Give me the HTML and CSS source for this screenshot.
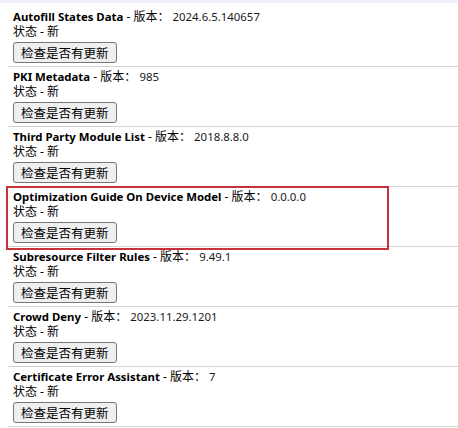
FILE: index.html
```html
<!DOCTYPE html>
<html lang="zh-CN">
<head>
    <meta charset="UTF-8">
    <meta name="viewport" content="width=device-width, initial-scale=1.0">
    <title>组件</title>
    <link rel="stylesheet" href="styles.css">
</head>
<body>
    <div class="top-strip"></div>
    <div class="component-list">
        <div class="component">
            <div class="component-title"><span class="component-name">Autofill States Data</span> - <span>版本：</span> <span class="component-version">2024.6.5.140657</span></div>
            <div class="component-status">状态 - 新</div>
            <button class="check-button">检查是否有更新</button>
        </div>
        <div class="component">
            <div class="component-title"><span class="component-name">PKI Metadata</span> - <span>版本：</span> <span class="component-version">985</span></div>
            <div class="component-status">状态 - 新</div>
            <button class="check-button">检查是否有更新</button>
        </div>
        <div class="component">
            <div class="component-title"><span class="component-name">Third Party Module List</span> - <span>版本：</span> <span class="component-version">2018.8.8.0</span></div>
            <div class="component-status">状态 - 新</div>
            <button class="check-button">检查是否有更新</button>
        </div>
        <div class="component highlighted">
            <div class="component-title"><span class="component-name">Optimization Guide On Device Model</span> - <span>版本：</span> <span class="component-version">0.0.0.0</span></div>
            <div class="component-status">状态 - 新</div>
            <button class="check-button">检查是否有更新</button>
            <div class="highlight-box"></div>
        </div>
        <div class="component">
            <div class="component-title"><span class="component-name">Subresource Filter Rules</span> - <span>版本：</span> <span class="component-version">9.49.1</span></div>
            <div class="component-status">状态 - 新</div>
            <button class="check-button">检查是否有更新</button>
        </div>
        <div class="component">
            <div class="component-title"><span class="component-name">Crowd Deny</span> - <span>版本：</span> <span class="component-version">2023.11.29.1201</span></div>
            <div class="component-status">状态 - 新</div>
            <button class="check-button">检查是否有更新</button>
        </div>
        <div class="component">
            <div class="component-title"><span class="component-name">Certificate Error Assistant</span> - <span>版本：</span> <span class="component-version">7</span></div>
            <div class="component-status">状态 - 新</div>
            <button class="check-button">检查是否有更新</button>
        </div>
    </div>
</body>
</html>
```

FILE: styles.css
```css
/* Page */
body {
    margin: 0;
    font-family: "Noto Sans", "Noto Sans CJK SC", sans-serif;
    font-size: 12px;
    color: #000000;
    background-color: #ffffff;
}

.top-strip {
    height: 3px;
    background-color: #eef0fa;
}

/* Component rows */
.component-list {
    margin-top: 4px;
    margin-left: 8px;
}

.component {
    position: relative;
    padding: 2px 0 3px 5px;
    line-height: 15px;
    border-bottom: 1px solid #d3d3d3;
}

.component-name {
    font-size: 11.4px;
    font-weight: bold;
}

.component-version {
    font-size: 11.4px;
    color: #1a1a1a;
}

.check-button {
    display: block;
    margin-top: 3px;
    height: 21px;
    padding: 0 7px;
    font-family: "Noto Sans CJK SC", sans-serif;
    font-size: 12.5px;
    line-height: 19px;
    color: #000000;
    background-color: #efefef;
    border: 1px solid #767676;
    border-radius: 3px;
}

/* Red annotation frame */
.highlight-box {
    position: absolute;
    top: -1px;
    left: -2px;
    width: 379px;
    height: 60px;
    border: 2px solid #c8303a;
}
```
